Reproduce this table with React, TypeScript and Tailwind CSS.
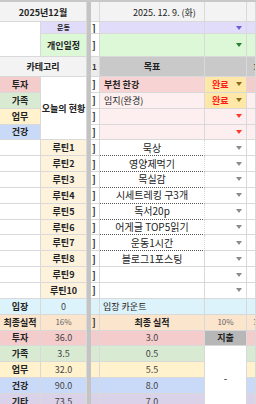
import type { ReactNode } from "react";
import clsx from "clsx";

// one spreadsheet cell
function Cell({ className, children }: { className?: string; children?: ReactNode }) {
  return (
    <div
      className={clsx(
        "flex items-center overflow-hidden whitespace-nowrap border-b border-r border-[#d9d9d9] leading-none",
        className
      )}
    >
      {children}
    </div>
  );
}

function Arrow({ color }: { color: string }) {
  return (
    <svg width="6" height="4" viewBox="0 0 6 4" className="ml-auto mr-[4px] shrink-0">
      <path d="M0 0h6L3 4z" fill={color} />
    </svg>
  );
}

function Bracket({ className }: { className?: string }) {
  return (
    <Cell className={clsx("pl-[1px] text-[10px] font-bold text-[#333]", className ?? "bg-white")}>]</Cell>
  );
}

const today = [
  { label: "투자", a: "bg-[#f4cccc]", goal: "부천 한강", c: "bg-[#f8d3d3] font-bold", done: true, e: "bg-[#f4cccc]" },
  { label: "가족", a: "bg-[#d9ead3]", goal: "임지(완경)", c: "bg-[#fdefef]", done: true, e: "bg-[#fdefef]" },
  { label: "업무", a: "bg-[#fff2cc]", goal: "", c: "bg-[#fdefef]", done: false, e: "bg-[#fdefef]" },
  { label: "건강", a: "bg-[#c9daf8]", goal: "", c: "bg-[#fdefef]", done: false, e: "bg-[#fdefef]" },
];

const routines = [
  "묵상",
  "영양제먹기",
  "목실감",
  "시세트레킹 구3개",
  "독서20p",
  "어게글 TOP5읽기",
  "운동1시간",
  "블로그1포스팅",
  "",
  "",
];

const results = [
  { label: "투자", bg: "bg-[#f4cccc]", total: "36.0", today: "3.0" },
  { label: "가족", bg: "bg-[#d9ead3]", total: "3.5", today: "0.5" },
  { label: "업무", bg: "bg-[#fff2cc]", total: "32.0", today: "5.5" },
  { label: "건강", bg: "bg-[#c9daf8]", total: "90.0", today: "8.0" },
  { label: "기타", bg: "bg-[#d9d2e9]", total: "73.5", today: "7.0" },
];

export default function App() {
  return (
    <div className="grid h-[404px] w-[256px] grid-cols-[41px_46px_4px_9px_105px_42px_9px] grid-rows-[20px_12px_23px_20px_repeat(21,15.85px)] overflow-hidden border-t-2 border-[#c8c8c8] bg-white font-[family-name:'Noto_Sans_CJK_KR',sans-serif] text-[9px] text-[#222]">
      {/* frozen pane divider */}
      <div className="col-start-3 row-span-25 row-start-1 bg-[#c4c4c4]" />

      {/* 날짜 */}
      <Cell className="col-span-2 justify-center bg-[#f3f3f3] pt-[2px] font-bold">2025년12월</Cell>
      <Cell className="bg-[#f3f3f3]" />
      <Cell className="bg-[#f3f3f3] pl-[33px] pt-[2px]">2025. 12. 9. (화)</Cell>
      <Cell className="bg-[#f3f3f3]" />
      <Cell className="bg-[#f3f3f3]" />

      {/* 운동 / 개인일정 */}
      <Cell className="row-span-2 bg-white" />
      <Cell className="items-end justify-center bg-[#e0dcfa] pb-[2px] text-[7px] font-bold">운동</Cell>
      <Bracket />
      <Cell className="bg-[#e0dcfa]" />
      <Cell className="bg-[#e0dcfa]">
        <Arrow color="#6b5fd6" />
      </Cell>
      <Cell className="bg-[#e0dcfa]" />

      <Cell className="justify-center bg-[#dcf8d6] font-bold">개인일정</Cell>
      <Bracket />
      <Cell className="bg-[#dcf8d6]" />
      <Cell className="bg-[#dcf8d6]">
        <Arrow color="#2e7d32" />
      </Cell>
      <Cell className="bg-[#dcf8d6]" />

      {/* 카테고리 / 목표 */}
      <Cell className="col-span-2 justify-center bg-[#f3f3f3] font-bold">카테고리</Cell>
      <Cell className="bg-[#ececec] pl-[1px] text-[8px] font-bold text-[#333]">1</Cell>
      <Cell className="justify-center bg-[#c9c9c9] font-bold">목표</Cell>
      <Cell className="bg-[#c9c9c9]" />
      <Cell className="bg-[#c9c9c9] pl-[6px] text-[8px] text-[#333]">1</Cell>

      {/* 오늘의 현황 */}
      {today.map((t, i) => (
        <div key={t.label} className="contents">
          <Cell className={clsx("justify-center font-bold", t.a)}>{t.label}</Cell>
          {i === 0 && <Cell className="row-span-4 justify-center bg-white font-bold">오늘의 현황</Cell>}
          <Bracket />
          <Cell className={clsx("pl-[4px]", t.c)}>{t.goal}</Cell>
          {t.done ? (
            <Cell className="bg-[#ffe7a8] pl-[7px] font-bold text-[#ff1a1a]">
              완료
              <Arrow color="#8a6a1c" />
            </Cell>
          ) : (
            <Cell className="bg-[#fdefef]">
              <Arrow color="#ff3b30" />
            </Cell>
          )}
          <Cell className={t.e} />
        </div>
      ))}

      {/* 루틴 */}
      {routines.map((r, i) => (
        <div key={i} className="contents">
          <Cell className="bg-white" />
          <Cell className="justify-center bg-[#fdf2dc] font-bold">루틴{i + 1}</Cell>
          <Bracket />
          <Cell
            className={clsx(
              "justify-center bg-white text-[10px]",
              i < 7 && "border-b-[#555] border-dotted"
            )}
          >
            {r}
          </Cell>
          <Cell className="bg-white">
            <Arrow color="#8c8c8c" />
          </Cell>
          <Cell className="bg-white" />
        </div>
      ))}

      {/* 입장 */}
      <Cell className="justify-center bg-[#dcf3fb] font-bold">입장</Cell>
      <Cell className="justify-center bg-[#dcf3fb] text-[#444]">0</Cell>
      <Cell className="bg-[#dcf3fb]" />
      <Cell className="bg-[#dcf3fb] pl-[3px]">입장 카운트</Cell>
      <Cell className="bg-[#dcf3fb]" />
      <Cell className="bg-[#dcf3fb]" />

      {/* 최종 실적 */}
      <Cell className="justify-center bg-[#fce5cd] font-bold">최종실적</Cell>
      <Cell className="justify-center bg-[#fce5cd] text-[8px] text-[#666]">16%</Cell>
      <Bracket className="bg-[#fce5cd]" />
      <Cell className="justify-center bg-[#fce5cd] font-bold">최종 실적</Cell>
      <Cell className="justify-center bg-[#fce5cd] text-[8px] text-[#666]">10%</Cell>
      <Cell className="bg-[#fce5cd] pl-[6px] text-[8px] text-[#666]">1</Cell>

      {results.map((r, i) => (
        <div key={r.label} className="contents">
          <Cell className={clsx("justify-center font-bold", r.bg)}>{r.label}</Cell>
          <Cell className={clsx("justify-center text-[#444]", r.bg)}>{r.total}</Cell>
          <Cell className={r.bg} />
          <Cell className={clsx("justify-center text-[#444]", r.bg)}>{r.today}</Cell>
          {i === 0 && <Cell className="justify-center bg-[#b7b7b7] font-bold">지출</Cell>}
          {i === 1 && <Cell className="row-span-4 justify-center bg-white text-[10px]">-</Cell>}
          <Cell className={r.bg} />
        </div>
      ))}
    </div>
  );
}
